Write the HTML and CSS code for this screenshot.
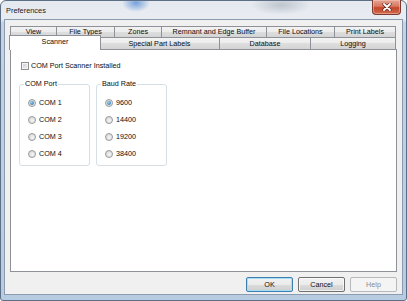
FILE: index.html
```html
<!DOCTYPE html>
<html lang="en">
<head>
    <meta charset="UTF-8">
    <title>Preferences</title>
    <link rel="stylesheet" href="styles.css">
</head>
<body>

<div class="window">
    <div class="titlebar">
        <span class="title">Preferences</span>
        <button class="close" aria-label="Close">
            <svg width="10" height="8" viewBox="0 0 10 8">
                <path d="M2 1 L8 7 M8 1 L2 7" stroke="#5b2a22" stroke-width="3.2" stroke-linecap="round"/>
                <path d="M2 1 L8 7 M8 1 L2 7" stroke="#fff" stroke-width="1.8" stroke-linecap="round"/>
            </svg>
        </button>
    </div>

    <div class="client">
        <div class="tabs">
            <div class="tab-row back">
                <div class="tab">View</div>
                <div class="tab">File Types</div>
                <div class="tab">Zones</div>
                <div class="tab">Remnant and Edge Buffer</div>
                <div class="tab">File Locations</div>
                <div class="tab">Print Labels</div>
            </div>
            <div class="tab-row front">
                <div class="tab selected">Scanner</div>
                <div class="tab">Special Part Labels</div>
                <div class="tab">Database</div>
                <div class="tab">Logging</div>
            </div>
        </div>

        <div class="panel">
            <label class="check-row">
                <input type="checkbox" class="check">
                <span>COM Port Scanner Installed</span>
            </label>

            <div class="groups">
                <fieldset class="group">
                    <legend>COM Port</legend>
                    <div class="options">
                        <label class="option"><input type="radio" name="port" class="radio" checked><span>COM 1</span></label>
                        <label class="option"><input type="radio" name="port" class="radio"><span>COM 2</span></label>
                        <label class="option"><input type="radio" name="port" class="radio"><span>COM 3</span></label>
                        <label class="option"><input type="radio" name="port" class="radio"><span>COM 4</span></label>
                    </div>
                </fieldset>
                <fieldset class="group">
                    <legend>Baud Rate</legend>
                    <div class="options">
                        <label class="option"><input type="radio" name="baud" class="radio" checked><span>9600</span></label>
                        <label class="option"><input type="radio" name="baud" class="radio"><span>14400</span></label>
                        <label class="option"><input type="radio" name="baud" class="radio"><span>19200</span></label>
                        <label class="option"><input type="radio" name="baud" class="radio"><span>38400</span></label>
                    </div>
                </fieldset>
            </div>
        </div>

        <div class="buttons">
            <button class="btn default">OK</button>
            <button class="btn">Cancel</button>
            <button class="btn" disabled>Help</button>
        </div>
    </div>
</div>

</body>
</html>
```

FILE: styles.css
```css
body {
    margin: 0;
    background: #fff;
    font-family: 'Liberation Sans', Arial, sans-serif;
    font-size: 7.2px;
    color: #0c0c0c;
}

.window {
    width: 407px;
    height: 301px;
    box-sizing: border-box;
    border: 1px solid #5c6f86;
    border-radius: 6px 6px 3px 3px;
    padding: 0 3px 5px 3px;
    display: flex;
    flex-direction: column;
    background:
        radial-gradient(ellipse 14px 9px at 135px 2px, rgba(70, 130, 210, 0.7), rgba(70, 130, 210, 0)),
        radial-gradient(ellipse 30px 10px at 280px 4px, rgba(120, 130, 145, 0.35), rgba(120, 130, 145, 0)),
        linear-gradient(to bottom, #e4e9ef 0px, #e9edf2 18px, #c3d3e5 22px, #b7cbe1 100%);
}

/* title bar */
.titlebar {
    height: 18px;
    display: flex;
    align-items: flex-start;
}

.title {
    padding: 5px 0 0 2px;
    font-size: 7.4px;
    line-height: 9px;
    color: #1a1a1a;
}

.close {
    margin: -1px 2px 0 auto;
    width: 29px;
    height: 15px;
    padding: 0;
    border: 1px solid #7e3a30;
    border-top: none;
    border-radius: 0 0 4px 4px;
    background: linear-gradient(to bottom, #e6a696 0%, #d8765f 45%, #c4452a 55%, #cf6a4c 100%);
    box-shadow: inset 0 0 0 1px rgba(255, 210, 200, 0.45);
    display: flex;
    align-items: center;
    justify-content: center;
}

/* client area */
.client {
    flex: 1;
    background: #f0f0f0;
    border: 1px solid #8b9cb0;
    padding: 6px 5px 2px 5px;
    display: flex;
    flex-direction: column;
}

.tab-row {
    display: flex;
    height: 11px;
}

.tab-row.front {
    height: 12px;
}

.tab {
    flex: 0 0 auto;
    margin-left: -1px;
    border: 1px solid #8e9198;
    border-bottom: none;
    background: linear-gradient(to bottom, #f3f3f3 0%, #ebebeb 50%, #dedede 50%, #d4d4d4 100%);
    text-align: center;
    line-height: 10px;
    white-space: nowrap;
    box-sizing: border-box;
}

.tab:first-child {
    margin-left: 0;
}

/* tab widths, as the dialog lays them out */
.back .tab:nth-child(1) { width: 47px; }
.back .tab:nth-child(2) { width: 59px; }
.back .tab:nth-child(3) { width: 48px; }
.back .tab:nth-child(4) { width: 106px; }
.back .tab:nth-child(5) { width: 69px; }
.back .tab:nth-child(6) { width: 62px; }

.front .tab:nth-child(1) { width: 92px; }
.front .tab:nth-child(2) { width: 121px; }
.front .tab:nth-child(3) { width: 92px; }
.front .tab:nth-child(4) { width: 86px; }

.front .tab {
    line-height: 11px;
}

.tab.selected {
    position: relative;
    z-index: 1;
    background: #fff;
    margin: -2px -1px -1px -1px;
    line-height: 11px;
    padding-bottom: 3px;
}

.panel {
    flex: 1;
    background: #fff;
    border: 1px solid #8e9198;
    padding: 12px 0 0 8px;
}

.check-row {
    display: flex;
    align-items: center;
    gap: 2px;
    margin-left: 2px;
    line-height: 8px;
}

.check {
    appearance: none;
    margin: 0;
    width: 8px;
    height: 8px;
    border: 1px solid #8e8f8f;
    background: linear-gradient(135deg, #c9cdd3, #f2f2f2);
    box-shadow: inset 0 0 0 1px #f4f4f4;
}

.groups {
    display: flex;
    gap: 6px;
    margin-top: 10px;
}

.group {
    width: 71px;
    box-sizing: border-box;
    margin: 0;
    padding: 6px 0 3px 4px;
    border: 1px solid #d5dfe5;
    border-radius: 3px;
}

.group legend {
    padding: 0 1px;
    line-height: 8px;
}

.options {
    padding-left: 4px;
}

.option {
    display: flex;
    align-items: center;
    gap: 3px;
    height: 17px;
}

.radio {
    appearance: none;
    margin: 0;
    width: 8px;
    height: 8px;
    border: 1px solid #999;
    border-radius: 50%;
    background: radial-gradient(circle at 60% 60%, #f6f6f6, #cfcfcf);
    display: flex;
    align-items: center;
    justify-content: center;
}

.radio:checked::after {
    content: "";
    width: 4px;
    height: 4px;
    border-radius: 50%;
    background: radial-gradient(circle at 35% 35%, #8fd0f5, #1f64ab);
}

/* dialog buttons */
.buttons {
    display: flex;
    justify-content: flex-end;
    gap: 5px;
    margin-top: 5px;
}

.btn {
    width: 47px;
    height: 15px;
    padding: 0;
    font-family: inherit;
    font-size: 7.2px;
    color: #111;
    border: 1px solid #707070;
    border-radius: 2px;
    background: linear-gradient(to bottom, #f2f2f2 0%, #ebebeb 50%, #dddddd 50%, #cfcfcf 100%);
    box-shadow: inset 0 0 0 1px rgba(255, 255, 255, 0.7);
}

.btn.default {
    border-color: #3c7fb1;
    box-shadow: inset 0 0 0 1px #a9dcf5;
}

.btn:disabled {
    color: #8a8a8a;
    border-color: #b5b9bc;
    background: #f4f4f4;
    box-shadow: none;
}
```
